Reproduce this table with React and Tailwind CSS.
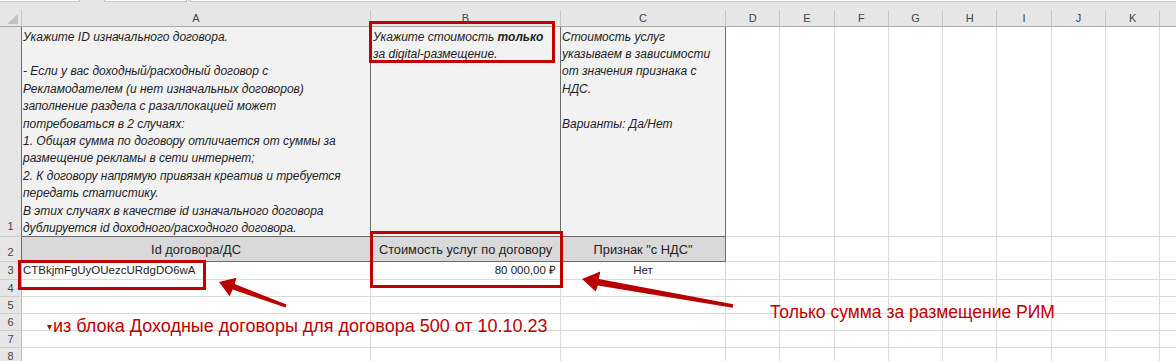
import React from 'react';

const extraCols = ['D', 'E', 'F', 'G', 'H', 'I', 'J', 'K'];

function ExtraCells() {
    return (
        <>
            {extraCols.map((c) => (
                <div key={c} className="w-[54.3px] shrink-0 border-r border-b border-[#dadada]" />
            ))}
            <div className="flex-1 border-b border-[#dadada]" />
        </>
    );
}

function RowNum({ n, bottom, dark }) {
    return (
        <div
            className={`w-[22px] shrink-0 bg-[#e6e6e6] border-b border-r border-b-[#d0d0d0] text-[11px] text-[#444] not-italic flex justify-center ${bottom ? 'items-end pb-[1px]' : 'items-center'} ${dark ? 'border-r-[#6b6b6b]' : 'border-r-[#bdbdbd]'}`}
        >
            {n}
        </div>
    );
}

function BlankRow({ n }) {
    return (
        <div className="flex h-[17px]">
            <RowNum n={n} />
            <div className="w-[349px] shrink-0 border-r border-b border-[#dadada]" />
            <div className="w-[190px] shrink-0 border-r border-b border-[#dadada]" />
            <div className="w-[165px] shrink-0 border-r border-b border-[#dadada]" />
            <ExtraCells />
        </div>
    );
}

export default function App() {
    return (
        <div className="relative w-[1176px] h-[361px] overflow-hidden bg-white font-['Liberation_Sans',Arial,sans-serif] text-[#222]">

            {/* formula bar remnants */}
            <div className="flex h-[3px] bg-[#e6e6e6]">
                <div className="w-[80px] h-[2px] bg-white border-b border-r border-[#c6c6c6]" />
                <div className="w-[24px]" />
                <div className="w-[83px] h-[2px] bg-white border-b border-x border-[#c6c6c6]" />
                <div className="w-[3px]" />
                <div className="flex-1 h-[2px] bg-white border-b border-l border-[#c6c6c6]" />
            </div>
            <div className="h-[7px] bg-[#e6e6e6]" />

            {/* column headers */}
            <div className="flex h-[17px] bg-[#e6e6e6] border-b border-[#a9a9a9] text-[11px] text-[#444]">
                <div className="w-[22px] shrink-0 border-r border-[#c6c6c6] relative">
                    <svg className="absolute left-[7px] top-[4px]" width="11" height="10" viewBox="0 0 11 10">
                        <polygon points="11,0 11,10 0,10" fill="#c2c2c2" />
                    </svg>
                </div>
                <div className="w-[349px] shrink-0 border-r border-[#c6c6c6] flex items-center justify-center">A</div>
                <div className="w-[190px] shrink-0 border-r border-[#c6c6c6] flex items-center justify-center">B</div>
                <div className="w-[165px] shrink-0 border-r border-[#c6c6c6] flex items-center justify-center">C</div>
                {extraCols.map((c) => (
                    <div key={c} className="w-[54.3px] shrink-0 border-r border-[#c6c6c6] flex items-center justify-center">{c}</div>
                ))}
                <div className="flex-1" />
            </div>

            {/* row 1: instructions */}
            <div className="flex h-[210px] text-[12px] italic leading-[17.4px]">
                <RowNum n="1" bottom dark />
                <div className="w-[349px] shrink-0 bg-[#f2f2f2] border-r border-b border-[#6b6b6b] px-[1px] pt-[1.5px]">
                    <p>Укажите ID изначального договора.</p>
                    <p>&nbsp;</p>
                    <p>- Если у вас доходный/расходный договор с</p>
                    <p>Рекламодателем (и нет изначальных договоров)</p>
                    <p>заполнение раздела с разаллокацией может</p>
                    <p>потребоваться в 2 случаях:</p>
                    <p>1. Общая сумма по договору отличается от суммы за</p>
                    <p>размещение рекламы в сети интернет;</p>
                    <p>2. К договору напрямую привязан креатив и требуется</p>
                    <p>передать статистику.</p>
                    <p>В этих случаях в качестве id изначального договора</p>
                    <p>дублируется id доходного/расходного договора.</p>
                </div>
                <div className="w-[190px] shrink-0 bg-[#f2f2f2] border-r border-b border-[#6b6b6b] px-[2px] pt-[1.5px]">
                    <p>Укажите стоимость <b>только</b></p>
                    <p>за digital-размещение.</p>
                </div>
                <div className="w-[165px] shrink-0 bg-[#f2f2f2] border-r border-b border-[#6b6b6b] px-[1px] pt-[1.5px]">
                    <p>Стоимость услуг</p>
                    <p>указываем в зависимости</p>
                    <p>от значения признака с</p>
                    <p>НДС.</p>
                    <p>&nbsp;</p>
                    <p>Варианты: Да/Нет</p>
                </div>
                <ExtraCells />
            </div>

            {/* row 2: column titles */}
            <div className="flex h-[25px] text-[12.8px]">
                <RowNum n="2" bottom dark />
                <div className="w-[349px] shrink-0 bg-[#d9d9d9] border-r border-b border-[#6b6b6b] flex items-center justify-center pt-[2px]">Id договора/ДС</div>
                <div className="w-[190px] shrink-0 bg-[#d9d9d9] border-r border-b border-[#6b6b6b] flex items-center justify-center pt-[2px]">Стоимость услуг по договору</div>
                <div className="w-[165px] shrink-0 bg-[#d9d9d9] border-r border-b border-[#6b6b6b] flex items-center justify-center pt-[2px]">Признак "с НДС"</div>
                <ExtraCells />
            </div>

            {/* row 3: values */}
            <div className="flex h-[18px] text-[11.5px]">
                <RowNum n="3" />
                <div className="w-[349px] shrink-0 border-r border-b border-[#dadada] flex items-center px-[1px]">CTBkjmFgUyOUezcURdgDO6wA</div>
                <div className="w-[190px] shrink-0 border-r border-b border-[#dadada] flex items-center justify-end px-[4px]">80 000,00 ₽</div>
                <div className="w-[165px] shrink-0 border-r border-b border-[#dadada] flex items-center justify-center">Нет</div>
                <ExtraCells />
            </div>

            <BlankRow n="4" />
            <BlankRow n="5" />
            <BlankRow n="6" />
            <BlankRow n="7" />
            <BlankRow n="8" />

            {/* annotation frames */}
            <div className="absolute left-[369px] top-[21px] w-[186px] h-[42px] border-[3px] border-[#c00000]" />
            <div className="absolute left-[370px] top-[231px] w-[193px] h-[57px] border-[3px] border-[#c00000]" />
            <div className="absolute left-[18px] top-[260px] w-[188px] h-[30px] border-[3px] border-[#c00000]" />

            {/* arrows */}
            <svg className="absolute left-0 top-0" width="1176" height="361" viewBox="0 0 1176 361">
                <polygon
                    points="219,282 236.5,277.8 234.6,283.9 286.5,304.6 285.5,307.4 232.6,289.5 229.7,296.3"
                    fill="#b80000"
                />
                <polygon
                    points="582,279 600.3,271.6 598.8,279 733.3,304.2 732.7,307.8 597.8,285.4 595.7,291.6"
                    fill="#b80000"
                />
                <polygon points="47,325 52,325 49.5,330" fill="#c00000" />
            </svg>

            {/* annotation notes */}
            <div className="absolute left-[53px] top-[316px] text-[18px] leading-[20px] text-[#c00000]">
                из блока Доходные договоры для договора 500 от 10.10.23
            </div>
            <div className="absolute left-[770px] top-[302px] text-[17.5px] leading-[20px] text-[#c00000]">
                Только сумма за размещение РИМ
            </div>
        </div>
    );
}
